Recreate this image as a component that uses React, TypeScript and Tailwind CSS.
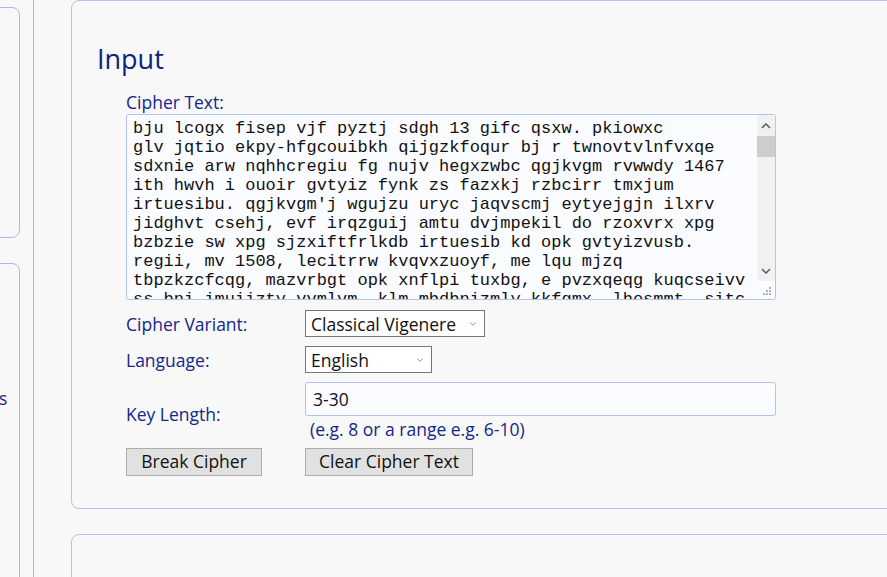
import { ChevronDown } from "lucide-react";

const cipherText = `bju lcogx fisep vjf pyztj sdgh 13 gifc qsxw. pkiowxc
glv jqtio ekpy-hfgcouibkh qijgzkfoqur bj r twnovtvlnfvxqe
sdxnie arw nqhhcregiu fg nujv hegxzwbc qgjkvgm rvwwdy 1467
ith hwvh i ouoir gvtyiz fynk zs fazxkj rzbcirr tmxjum
irtuesibu. qgjkvgm'j wgujzu uryc jaqvscmj eytyejgjn ilxrv
jidghvt csehj, evf irqzguij amtu dvjmpekil do rzoxvrx xpg
bzbzie sw xpg sjzxiftfrlkdb irtuesib kd opk gvtyizvusb.
regii, mv 1508, lecitrrw kvqvxzuoyf, me lqu mjzq
tbpzkzcfcqg, mazvrbgt opk xnflpi tuxbg, e pvzxqeqg kuqcseivv
ss bni imuiizty vvmlvm, klm mbdbnizmly kkfgmx, lhosmmt, sitc
qgjkvgm xvnb lzrf apyhvn ebsmz tq kvgemwd xpg opk nujvtsr
ormhs, ewzvb dvjmpekil hfgcouibkh, mv 1512 irtuesibu ilxrv
sdgh gifc qsxw. pkiowxc wgujzu jaqvscmj eytyejgjn rzbcirr`;

const Chevron = ({ up }: { up?: boolean }) => (
  <svg width="10" height="6" viewBox="0 0 10 6" className="text-[#5f5f5f]">
    <polyline
      points={up ? "1,5 5,1 9,5" : "1,1 5,5 9,1"}
      fill="none"
      stroke="currentColor"
      strokeWidth="1.6"
    />
  </svg>
);

const App = () => {
  return (
    <div className="flex w-[887px] h-[577px] overflow-hidden bg-[#f8f8f8] font-['Open_Sans','Liberation_Sans',sans-serif] text-[17.5px] text-[#14268a]">
      {/* sidebar, clipped on the left */}
      <div className="w-[34px] shrink-0 border-r border-[#aab6ec] overflow-hidden">
        <div className="flex flex-col gap-[25px] -ml-[200px] pt-[7px] pr-[13px]">
          <div className="h-[231px] shrink-0 rounded-r-lg border border-[#aab6ec]" />
          <div className="h-[400px] shrink-0 rounded-r-lg border border-[#aab6ec] pt-[122px] pr-[12px] flex justify-end">
            <span className="w-[8px] leading-[24px]">s</span>
          </div>
        </div>
      </div>

      {/* main column */}
      <div className="flex-1 flex flex-col gap-[25px] pl-[37px] -mr-[40px]">
        <div className="h-[509px] shrink-0 rounded-lg border border-[#b4c2f0] px-[25px] pt-[40px]">
          <h2 className="text-[27px] leading-[36px] text-[#0e2282]">Input</h2>

          <div className="ml-[29px] mt-[15px]">
            <label className="block leading-[21px]">Cipher Text:</label>
            <div className="relative w-[650px] h-[186px] mt-[1px]">
              <textarea
                readOnly
                value={cipherText}
                className="block w-full h-full rounded-[3px] border border-[#b4c2f0] bg-[#fbfcff] pl-[6px] pr-[22px] pt-[4px] font-['Liberation_Mono',monospace] text-[17px] leading-[19px] text-[#111] overflow-hidden resize-none outline-none"
              />
              {/* scrollbar */}
              <div className="absolute top-[1px] right-[1px] w-[18px] h-[166px] bg-[#f1f1f1] flex flex-col items-center">
                <div className="h-[21px] flex items-center justify-center">
                  <Chevron up />
                </div>
                <div className="w-full h-[21px] bg-[#cdcdcd]" />
                <div className="flex-1" />
                <div className="h-[21px] flex items-center justify-center">
                  <Chevron />
                </div>
              </div>
              {/* resize grip */}
              <svg width="10" height="10" viewBox="0 0 10 10" className="absolute right-[4px] bottom-[4px]">
                <rect x="7" y="1" width="2" height="2" fill="#b0b0b0" />
                <rect x="4" y="4" width="2" height="2" fill="#b0b0b0" />
                <rect x="7" y="4" width="2" height="2" fill="#b0b0b0" />
                <rect x="1" y="7" width="2" height="2" fill="#b0b0b0" />
                <rect x="4" y="7" width="2" height="2" fill="#b0b0b0" />
                <rect x="7" y="7" width="2" height="2" fill="#b0b0b0" />
              </svg>
            </div>

            <div className="grid grid-cols-[179px_1fr] items-center mt-[10px] gap-y-[9px]">
              <span>Cipher Variant:</span>
              <div className="relative w-[180px]">
                <select className="w-full h-[27px] appearance-none border border-[#767676] bg-white pl-[5px] text-[#111] outline-none">
                  <option>Classical Vigenere</option>
                </select>
                <ChevronDown className="absolute right-[7px] top-[9px] size-[10px] text-[#555] pointer-events-none" strokeWidth={1.5} />
              </div>

              <span>Language:</span>
              <div className="relative w-[127px]">
                <select className="w-full h-[27px] appearance-none border border-[#767676] bg-white pl-[5px] text-[#111] outline-none">
                  <option>English</option>
                </select>
                <ChevronDown className="absolute right-[7px] top-[9px] size-[10px] text-[#555] pointer-events-none" strokeWidth={1.5} />
              </div>

              <span className="self-start mt-[18px]">Key Length:</span>
              <div className="flex flex-col -mt-[1px]">
                <input
                  readOnly
                  value="3-30"
                  className="w-[471px] h-[34px] rounded-[3px] border border-[#b4c2f0] bg-[#fbfcff] px-[7px] text-[#111] outline-none"
                />
                <span className="pl-[5px] leading-[27px]">(e.g. 8 or a range e.g. 6-10)</span>
              </div>
            </div>

            <div className="grid grid-cols-[179px_1fr] mt-[5px]">
              <div>
                <button className="h-[28px] w-[136px] border border-[#adadad] bg-[#e1e1e1] text-[#111] leading-none">
                  Break Cipher
                </button>
              </div>
              <div>
                <button className="h-[28px] w-[168px] border border-[#adadad] bg-[#e1e1e1] text-[#111] leading-none">
                  Clear Cipher Text
                </button>
              </div>
            </div>
          </div>
        </div>

        <div className="h-[200px] shrink-0 rounded-lg border border-[#b4c2f0]" />
      </div>
    </div>
  );
};

export default App;
